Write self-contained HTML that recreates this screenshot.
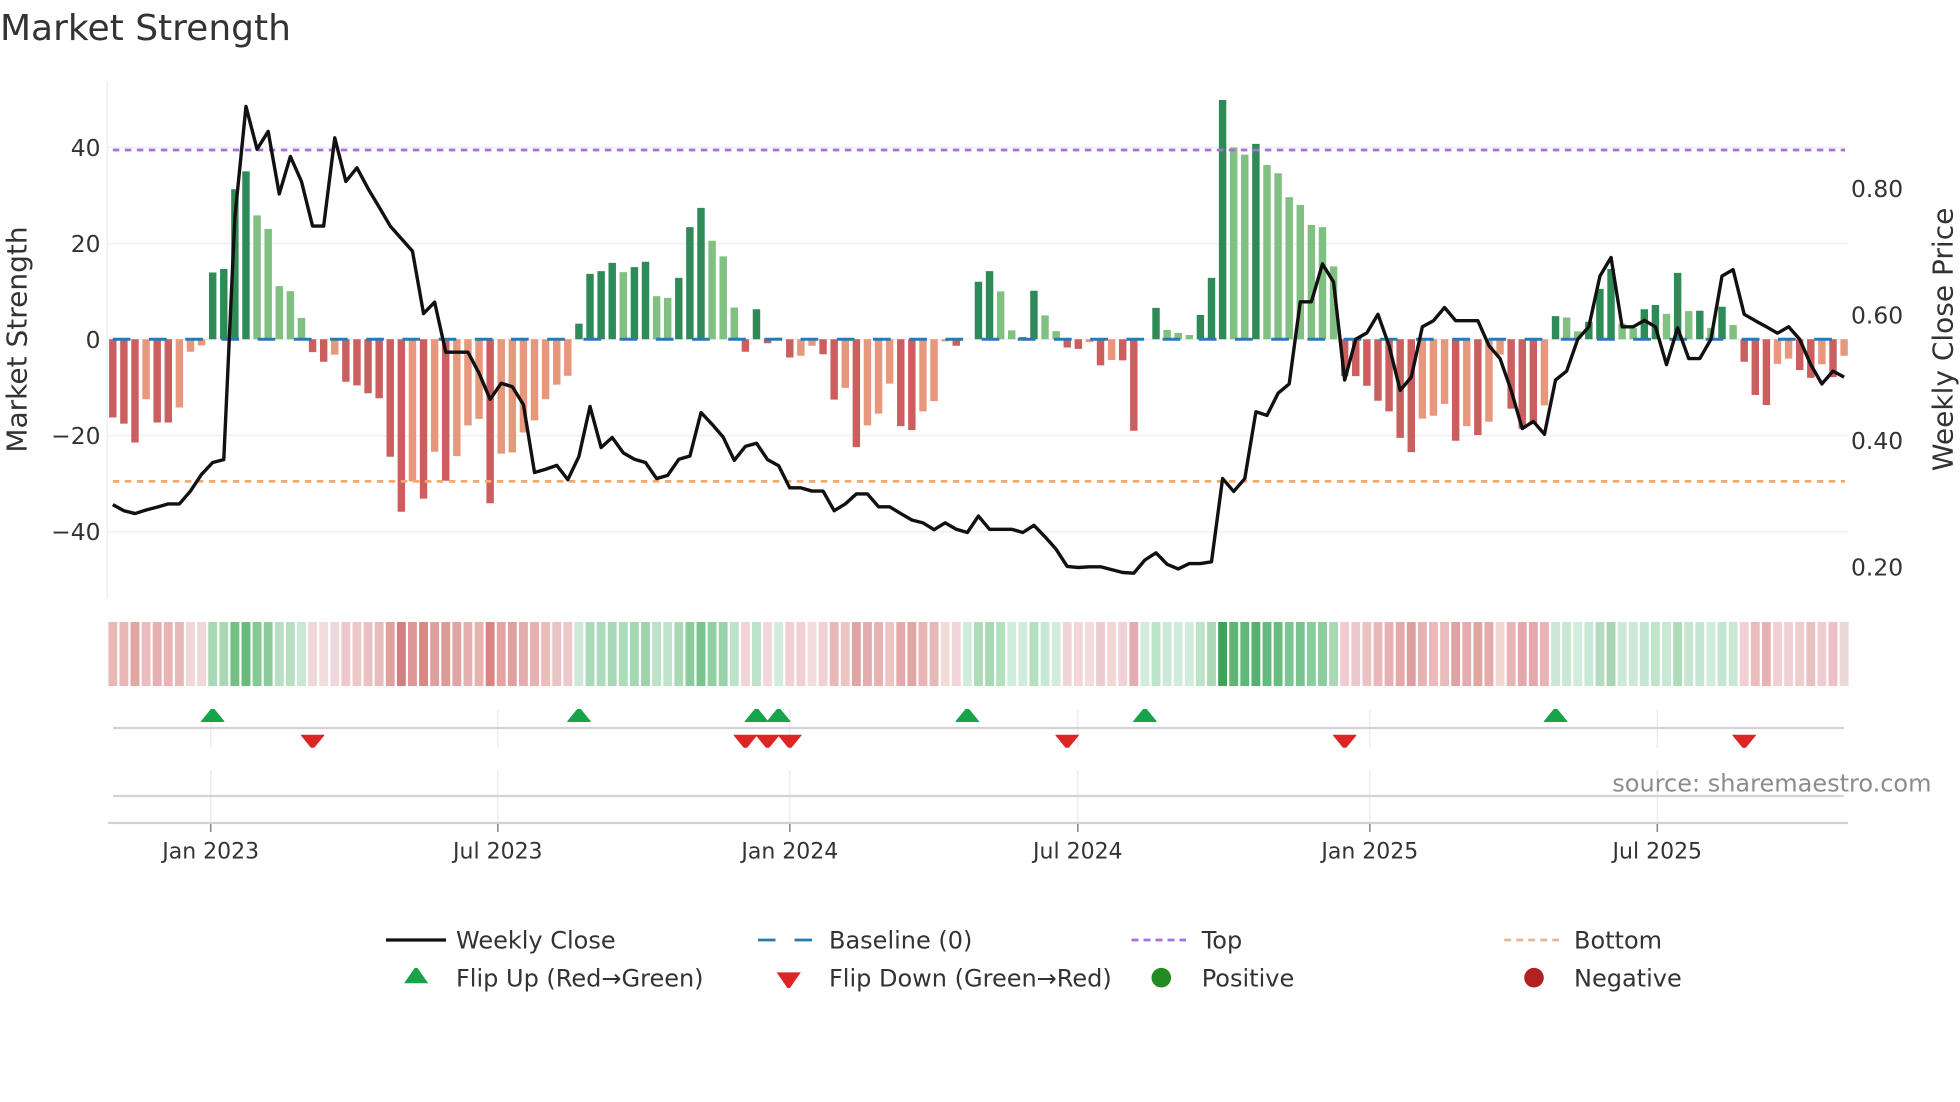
<!DOCTYPE html>
<html lang="en">
<head>
<meta charset="utf-8">
<title>Market Strength</title>
<style>
html,body{margin:0;padding:0;background:#fff;width:1960px;height:1102px;overflow:hidden}
svg{display:block}
text{font-family:"DejaVu Sans","Liberation Sans",sans-serif;fill:#333}
.t{font-size:23.4px}
.x{font-size:22px;text-anchor:middle}
.l{font-size:24px}
</style>
</head>
<body>
<svg width="1960" height="1102" viewBox="0 0 1960 1102" xmlns="http://www.w3.org/2000/svg">
<rect width="1960" height="1102" fill="#fff"/>
<text x="0" y="40" style="font-size:36px">Market Strength</text>

<!-- grid -->
<path d="M107 147.4H1848M107 243.6H1848M107 339.3H1848M107 435.7H1848M107 531.8H1848M107.3 81V599" stroke="#eff0f5" stroke-width="1.6" fill="none"/>

<!-- bars -->
<g transform="translate(112.8,60) scale(11.098,.35714)" stroke-width=".67" fill="none">
<path stroke="#cb5e5e" d="M0 782V1001M1 782V1018M2 782V1071M4 782V1015M5 782V1015M18 782V818M19 782V845M21 782V901M22 782V911M23 782V933M24 782V947M25 782V1111M26 782V1265M28 782V1228M30 782V1178M34 782V1241M57 782V817M59 782V793M61 782V833M64 782V824M65 782V951M67 782V1084M71 782V1025M72 782V1036M76 782V800M86 782V805M87 782V809M89 782V855M91 782V841M92 782V1038M111 782V885M112 782V885M113 782V912M114 782V954M115 782V984M116 782V1058M117 782V1098M121 782V1066M123 782V1050M126 782V976M127 782V1032M128 782V1020M147 782V845M148 782V938M149 782V966M152 782V868M153 782V890M155 782V888"/>
<path stroke="#e6977c" d="M3 782V950M6 782V973M7 782V817M8 782V799M20 782V825M27 782V1180M29 782V1097M31 782V1109M32 782V1023M33 782V1005M35 782V1102M36 782V1099M37 782V1043M38 782V1009M39 782V950M40 782V909M41 782V884M62 782V828M63 782V800M66 782V918M68 782V1023M69 782V990M70 782V906M73 782V984M74 782V955M75 782V788M88 782V790M90 782V840M118 782V1004M119 782V996M120 782V963M122 782V1025M124 782V1013M125 782V825M129 782V967M150 782V851M151 782V836M154 782V852M156 782V828"/>
<path stroke="#2e8b57" d="M9 782V595M10 782V585M11 782V362M12 782V312M42 782V738M43 782V599M44 782V591M45 782V568M47 782V580M48 782V565M51 782V610M52 782V468M53 782V414M58 782V698M60 782V778M78 782V621M79 782V591M82 782V776M83 782V646M94 782V694M98 782V714M99 782V610M100 782V112M103 782V235M130 782V717M133 782V733M134 782V641M135 782V585M138 782V698M139 782V686M141 782V596M143 782V702M145 782V691"/>
<path stroke="#80c080" d="M13 782V435M14 782V473M15 782V633M16 782V647M17 782V722M46 782V594M49 782V661M50 782V666M54 782V506M55 782V550M56 782V693M80 782V648M81 782V757M84 782V715M85 782V759M95 782V756M96 782V764M97 782V770M101 782V245M102 782V265M104 782V294M105 782V317M106 782V384M107 782V406M108 782V462M109 782V468M110 782V578M131 782V721M132 782V760M136 782V738M137 782V750M140 782V711M142 782V703M144 782V750M146 782V742"/>
</g>

<!-- reference lines -->
<path d="M112.8 150H1845" stroke="#a66fdc" stroke-width="2.8" stroke-dasharray="6.5 5.5" fill="none"/>
<path d="M112.8 481.4H1845" stroke="#f3a96f" stroke-width="2.8" stroke-dasharray="6.5 5.5" fill="none"/>
<path d="M112.8 339.3H1845" stroke="#2a7ab0" stroke-width="3" stroke-dasharray="17.7 18.5" fill="none"/>

<!-- price -->
<g transform="translate(112.8,60) scale(11.098,.35714)">
<path fill="none" stroke="#111" stroke-width="3.4" stroke-linejoin="round" vector-effect="non-scaling-stroke" d="M0 1245L1 1262 2 1270 3 1260 4 1252 5 1243 6 1243 7 1207 8 1160 9 1127 10 1119 11 440 12 130 13 250 14 200 15 375 16 270 17 340 18 465 19 465 20 218 21 340 22 302 23 360 24 412 25 465 26 500 27 535 28 710 29 678 30 818 31 818 32 818 33 877 34 950 35 905 36 915 37 965 38 1155 39 1146 40 1135 41 1175 42 1110 43 970 44 1085 45 1057 46 1100 47 1118 48 1127 49 1172 50 1163 51 1118 52 1109 53 987 54 1020 55 1056 56 1121 57 1082 58 1073 59 1119 60 1136 61 1198 62 1198 63 1207 64 1207 65 1262 66 1243 67 1215 68 1215 69 1251 70 1251 71 1270 72 1288 73 1296 74 1315 75 1296 76 1314 77 1323 78 1277 79 1314 80 1314 81 1314 82 1323 83 1303 84 1335 85 1370 86 1418 87 1421 88 1419 89 1419 90 1427 91 1435 92 1437 93 1400 94 1380 95 1412 96 1425 97 1410 98 1410 99 1405 100 1172 101 1208 102 1172 103 985 104 995 105 933 106 907 107 677 108 677 109 571 110 622 111 896 112 782 113 764 114 712 115 800 116 925 117 888 118 747 119 730 120 693 121 730 122 730 123 730 124 800 125 836 126 925 127 1032 128 1012 129 1048 130 896 131 871 132 782 133 747 134 605 135 553 136 747 137 747 138 729 139 747 140 853 141 750 142 836 143 836 144 782 145 605 146 587 147 712 148 730 149 747 150 765 151 747 152 782 153 853 154 907 155 871 156 888"/>
</g>

<!-- y ticks -->
<g class="t" text-anchor="end">
<text x="100.5" y="156" class="t">40</text>
<text x="100.5" y="252" class="t">20</text>
<text x="100.5" y="348" class="t">0</text>
<text x="100.5" y="444" class="t">−20</text>
<text x="100.5" y="540" class="t">−40</text>
</g>
<text x="1851" y="197" class="t">0.80</text>
<text x="1851" y="323.5" class="t">0.60</text>
<text x="1851" y="449" class="t">0.40</text>
<text x="1851" y="575.5" class="t">0.20</text>
<text transform="translate(26.4,339.5) rotate(-90)" text-anchor="middle" style="font-size:28px">Market Strength</text>
<text transform="translate(1952.6,339.4) rotate(-90)" text-anchor="middle" style="font-size:28px">Weekly Close Price</text>

<!-- heat strip -->
<g transform="translate(112.8,622) scale(11.098,64)" stroke-width=".8" fill="none">
<path stroke="#e8b8b6" d="M0 0V1"/><path stroke="#e8b8b6" d="M1 0V1"/><path stroke="#dfa8a2" d="M2 0V1"/><path stroke="#ebbcbd" d="M3 0V1"/><path stroke="#e6afb0" d="M4 0V1"/><path stroke="#e8b3b3" d="M5 0V1"/><path stroke="#e8b8b8" d="M6 0V1"/><path stroke="#f0d8d6" d="M7 0V1"/><path stroke="#f0d8d8" d="M8 0V1"/><path stroke="#a9d8b6" d="M9 0V1"/>
<path stroke="#aad8b5" d="M10 0V1"/><path stroke="#73bf85" d="M11 0V1"/><path stroke="#68bb7b" d="M12 0V1"/><path stroke="#84c995" d="M13 0V1"/><path stroke="#8bcb9b" d="M14 0V1"/><path stroke="#b8dfc4" d="M15 0V1"/><path stroke="#b5e0c2" d="M16 0V1"/><path stroke="#c8e8d4" d="M17 0V1"/><path stroke="#f0d8d8" d="M18 0V1"/><path stroke="#f2dcdc" d="M19 0V1"/>
<path stroke="#efd8dc" d="M20 0V1"/><path stroke="#eec8c8" d="M21 0V1"/><path stroke="#eccaca" d="M22 0V1"/><path stroke="#eac0c0" d="M23 0V1"/><path stroke="#e6bcbc" d="M24 0V1"/><path stroke="#e0a09e" d="M25 0V1"/><path stroke="#d0807e" d="M26 0V1"/><path stroke="#dc9896" d="M27 0V1"/><path stroke="#d68a84" d="M28 0V1"/><path stroke="#dca09e" d="M29 0V1"/>
<path stroke="#de9a94" d="M30 0V1"/><path stroke="#e0a4a2" d="M31 0V1"/><path stroke="#e6b0ae" d="M32 0V1"/><path stroke="#e6b2b0" d="M33 0V1"/><path stroke="#d88482" d="M34 0V1"/><path stroke="#e2a4a2" d="M35 0V1"/><path stroke="#e0a09e" d="M36 0V1"/><path stroke="#e4acae" d="M37 0V1"/><path stroke="#e8b0b0" d="M38 0V1"/><path stroke="#ecbcb8" d="M39 0V1"/>
<path stroke="#e8c4c4" d="M40 0V1"/><path stroke="#eec8cc" d="M41 0V1"/><path stroke="#cce8d6" d="M42 0V1"/><path stroke="#a9dab9" d="M43 0V1"/><path stroke="#aedabc" d="M44 0V1"/><path stroke="#a8d8b6" d="M45 0V1"/><path stroke="#acdcb8" d="M46 0V1"/><path stroke="#a4d8b2" d="M47 0V1"/><path stroke="#9ed2ac" d="M48 0V1"/><path stroke="#bce2ca" d="M49 0V1"/>
<path stroke="#bee4cc" d="M50 0V1"/><path stroke="#a8d8b4" d="M51 0V1"/><path stroke="#8ccc9c" d="M52 0V1"/><path stroke="#78c48c" d="M53 0V1"/><path stroke="#90cfa0" d="M54 0V1"/><path stroke="#98d2a8" d="M55 0V1"/><path stroke="#bce2c8" d="M56 0V1"/><path stroke="#f2d4d6" d="M57 0V1"/><path stroke="#bce2ca" d="M58 0V1"/><path stroke="#f2d8dc" d="M59 0V1"/>
<path stroke="#d0ecdc" d="M60 0V1"/><path stroke="#f0d0d2" d="M61 0V1"/><path stroke="#f0d0d2" d="M62 0V1"/><path stroke="#f4dcdc" d="M63 0V1"/><path stroke="#f0d0d0" d="M64 0V1"/><path stroke="#e8b8b6" d="M65 0V1"/><path stroke="#ecc4c4" d="M66 0V1"/><path stroke="#e0a4a2" d="M67 0V1"/><path stroke="#e4acac" d="M68 0V1"/><path stroke="#e8b2b2" d="M69 0V1"/>
<path stroke="#ecc4c4" d="M70 0V1"/><path stroke="#e2aaac" d="M71 0V1"/><path stroke="#e0a6a2" d="M72 0V1"/><path stroke="#e8b4b6" d="M73 0V1"/><path stroke="#e4b8b6" d="M74 0V1"/><path stroke="#f2dcd8" d="M75 0V1"/><path stroke="#f0d6d8" d="M76 0V1"/><path stroke="#d2ecdc" d="M77 0V1"/><path stroke="#acdcb8" d="M78 0V1"/><path stroke="#a8d8b4" d="M79 0V1"/>
<path stroke="#b4e0c0" d="M80 0V1"/><path stroke="#d0ecdc" d="M81 0V1"/><path stroke="#d0ecdc" d="M82 0V1"/><path stroke="#b4e0c0" d="M83 0V1"/><path stroke="#c8e8d4" d="M84 0V1"/><path stroke="#d2ecdc" d="M85 0V1"/><path stroke="#f2d6d6" d="M86 0V1"/><path stroke="#f2d6d8" d="M87 0V1"/><path stroke="#f2dcdc" d="M88 0V1"/><path stroke="#eccece" d="M89 0V1"/>
<path stroke="#f2d6d6" d="M90 0V1"/><path stroke="#f0d2d4" d="M91 0V1"/><path stroke="#e4acb0" d="M92 0V1"/><path stroke="#d2ecdc" d="M93 0V1"/><path stroke="#bce4c8" d="M94 0V1"/><path stroke="#cce8d8" d="M95 0V1"/><path stroke="#d0ecdc" d="M96 0V1"/><path stroke="#d0ecdc" d="M97 0V1"/><path stroke="#bce4c8" d="M98 0V1"/><path stroke="#acd8b8" d="M99 0V1"/>
<path stroke="#3aa655" d="M100 0V1"/><path stroke="#5eb574" d="M101 0V1"/><path stroke="#60b878" d="M102 0V1"/><path stroke="#58b070" d="M103 0V1"/><path stroke="#64ba7c" d="M104 0V1"/><path stroke="#68bc80" d="M105 0V1"/><path stroke="#7cc692" d="M106 0V1"/><path stroke="#7cc290" d="M107 0V1"/><path stroke="#8acc9c" d="M108 0V1"/><path stroke="#8ccc9e" d="M109 0V1"/>
<path stroke="#a8d8b4" d="M110 0V1"/><path stroke="#f0ccce" d="M111 0V1"/><path stroke="#ecc8cc" d="M112 0V1"/><path stroke="#ecc2c2" d="M113 0V1"/><path stroke="#eab8b8" d="M114 0V1"/><path stroke="#e8b0b4" d="M115 0V1"/><path stroke="#e6a8a8" d="M116 0V1"/><path stroke="#de9e9e" d="M117 0V1"/><path stroke="#e8b0b0" d="M118 0V1"/><path stroke="#ecb8ba" d="M119 0V1"/>
<path stroke="#e8bcbc" d="M120 0V1"/><path stroke="#dea4a4" d="M121 0V1"/><path stroke="#e4acb0" d="M122 0V1"/><path stroke="#e0a6a0" d="M123 0V1"/><path stroke="#e4aaac" d="M124 0V1"/><path stroke="#f2d6d2" d="M125 0V1"/><path stroke="#e8b4b6" d="M126 0V1"/><path stroke="#e4a8a8" d="M127 0V1"/><path stroke="#e4a8ac" d="M128 0V1"/><path stroke="#eab4b6" d="M129 0V1"/>
<path stroke="#c8e8d4" d="M130 0V1"/><path stroke="#c8e8d4" d="M131 0V1"/><path stroke="#d0ecdc" d="M132 0V1"/><path stroke="#c8e8d4" d="M133 0V1"/><path stroke="#b4dcc0" d="M134 0V1"/><path stroke="#a8d4b4" d="M135 0V1"/><path stroke="#cce8d6" d="M136 0V1"/><path stroke="#cce8d6" d="M137 0V1"/><path stroke="#c4e6d2" d="M138 0V1"/><path stroke="#bee4cc" d="M139 0V1"/>
<path stroke="#c8e8d4" d="M140 0V1"/><path stroke="#acdcb8" d="M141 0V1"/><path stroke="#c4e6d2" d="M142 0V1"/><path stroke="#c4e6d2" d="M143 0V1"/><path stroke="#d0ecdc" d="M144 0V1"/><path stroke="#c4e6d0" d="M145 0V1"/><path stroke="#c8e8d4" d="M146 0V1"/><path stroke="#f0d0d4" d="M147 0V1"/><path stroke="#ecbcbc" d="M148 0V1"/><path stroke="#e8b2b4" d="M149 0V1"/>
<path stroke="#f2d0d2" d="M150 0V1"/><path stroke="#f0d0d2" d="M151 0V1"/><path stroke="#f0cccc" d="M152 0V1"/><path stroke="#e8c0c2" d="M153 0V1"/><path stroke="#eeccd0" d="M154 0V1"/><path stroke="#ecc0c4" d="M155 0V1"/><path stroke="#ead8d6" d="M156 0V1"/>
</g>

<!-- flip panel grid -->
<path d="M210.7 709V748M210.7 770V823M497.8 709V748M497.8 770V823M789.8 709V748M789.8 770V823M1077.8 709V748M1077.8 770V823M1369.8 709V748M1369.8 770V823M1657.3 709V748M1657.3 770V823" stroke="#eceef2" stroke-width="1.6" fill="none"/>
<path d="M113 728H1843.7M113 796H1843.7M108 823H1848" stroke="#d2d2d6" stroke-width="2.2" fill="none"/>
<path d="M210.7 824V832M497.8 824V832M789.8 824V832M1077.8 824V832M1369.8 824V832M1657.3 824V832" stroke="#8a8a8a" stroke-width="1.6" fill="none"/>

<!-- flips -->
<g fill="#16a34a" stroke="#16a34a" stroke-width="1" stroke-linejoin="round">
<path transform="translate(212.7,709)" d="M-11.3 12.5L-1.5 .5H1.5L11.3 12.5Z"/>
<path transform="translate(579,709)" d="M-11.3 12.5L-1.5 .5H1.5L11.3 12.5Z"/>
<path transform="translate(756.5,709)" d="M-11.3 12.5L-1.5 .5H1.5L11.3 12.5Z"/>
<path transform="translate(778.7,709)" d="M-11.3 12.5L-1.5 .5H1.5L11.3 12.5Z"/>
<path transform="translate(967.3,709)" d="M-11.3 12.5L-1.5 .5H1.5L11.3 12.5Z"/>
<path transform="translate(1144.9,709)" d="M-11.3 12.5L-1.5 .5H1.5L11.3 12.5Z"/>
<path transform="translate(1555.6,709)" d="M-11.3 12.5L-1.5 .5H1.5L11.3 12.5Z"/>
</g>
<g fill="#dc2626" stroke="#dc2626" stroke-width="1" stroke-linejoin="round">
<path transform="translate(312.6,734.7)" d="M-11.3 .5H11.3L1.5 12.5H-1.5Z"/>
<path transform="translate(745.4,734.7)" d="M-11.3 .5H11.3L1.5 12.5H-1.5Z"/>
<path transform="translate(767.6,734.7)" d="M-11.3 .5H11.3L1.5 12.5H-1.5Z"/>
<path transform="translate(789.8,734.7)" d="M-11.3 .5H11.3L1.5 12.5H-1.5Z"/>
<path transform="translate(1067.2,734.7)" d="M-11.3 .5H11.3L1.5 12.5H-1.5Z"/>
<path transform="translate(1344.7,734.7)" d="M-11.3 .5H11.3L1.5 12.5H-1.5Z"/>
<path transform="translate(1744.2,734.7)" d="M-11.3 .5H11.3L1.5 12.5H-1.5Z"/>
</g>

<text x="1612.3" y="791.5" style="font-size:24px;fill:#8c8c8c">source: sharemaestro.com</text>

<!-- x ticks -->
<text x="210.7" y="858.3" class="x">Jan 2023</text>
<text x="497.8" y="858.3" class="x">Jul 2023</text>
<text x="789.8" y="858.3" class="x">Jan 2024</text>
<text x="1077.8" y="858.3" class="x">Jul 2024</text>
<text x="1369.8" y="858.3" class="x">Jan 2025</text>
<text x="1657.3" y="858.3" class="x">Jul 2025</text>

<!-- legend -->
<path d="M386 940H446" stroke="#111" stroke-width="3.2" fill="none"/>
<path d="M758 940H813" stroke="#2a7ab0" stroke-width="2.8" stroke-dasharray="17.5 19" fill="none"/>
<path d="M1131.5 940H1186" stroke="#a970dd" stroke-width="2.7" stroke-dasharray="7 5" fill="none"/>
<path d="M1504.2 940H1559" stroke="#f0b48a" stroke-width="2.7" stroke-dasharray="7 5" fill="none"/>
<path d="M404 983.2H428.2L417.5 968H414.7Z" fill="#16a34a"/>
<path d="M776.6 972.4H800.8L790 988H787.4Z" fill="#dc2626"/>
<ellipse cx="1161.3" cy="977.7" rx="9.8" ry="9.8" fill="#228b22"/>
<ellipse cx="1534" cy="977.7" rx="9.8" ry="9.8" fill="#b22222"/>
<text x="456" y="948.5" class="l">Weekly Close</text>
<text x="829" y="948.5" class="l">Baseline (0)</text>
<text x="1201.7" y="948.5" class="l">Top</text>
<text x="1574" y="948.5" class="l">Bottom</text>
<text x="456" y="986.5" class="l">Flip Up (Red→Green)</text>
<text x="829" y="986.5" class="l">Flip Down (Green→Red)</text>
<text x="1201.7" y="986.5" class="l">Positive</text>
<text x="1574" y="986.5" class="l">Negative</text>
</svg>
</body>
</html>
